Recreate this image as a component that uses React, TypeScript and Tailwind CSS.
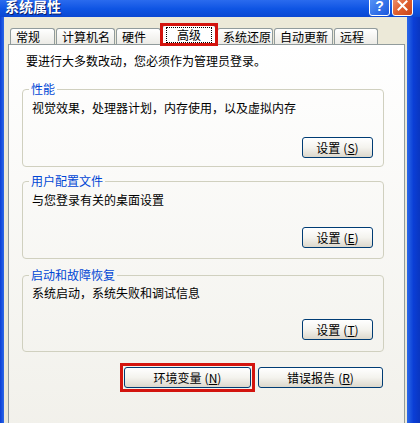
import React from "react";

function Tab({ label, cls }: { label: string; cls: string }) {
  return (
    <div
      className={`${cls} mt-[3px] h-[16px] shrink-0 rounded-t-[3px] border border-b-0 border-[#919B9C] bg-linear-to-b from-white to-[#ECEBE6] pl-[5px] text-[12px] leading-[15px] text-black whitespace-nowrap`}
    >
      {label}
    </div>
  );
}

function XPButton({ label, k, cls }: { label: string; k: string; cls: string }) {
  return (
    <div
      className={`${cls} h-[21px] shrink-0 rounded-[3px] border border-[#003C74] bg-linear-to-b from-white via-[#F4F3EE] to-[#DCD8CC] flex items-center justify-center text-[12px] leading-none text-black whitespace-nowrap`}
    >
      <span>{label}</span>
      <span className="ml-[3px]">
        (<span className="underline">{k}</span>)
      </span>
    </div>
  );
}

export default function App() {
  return (
    <div className="w-[420px] h-[423px] overflow-hidden flex flex-col bg-[#0B3ED6] font-['Noto_Sans_CJK_SC','Noto_Sans',sans-serif]">
      {/* Title bar */}
      <div className="h-[17px] shrink-0 flex items-start bg-linear-to-b from-[#2A6BEE] via-[#0F55E4] to-[#0A47D2]">
        <div className="ml-[5px] -mt-[1px] text-[14px] leading-[14px] font-bold text-white [text-shadow:1px_1px_0_#0A1E6A]">
          系统属性
        </div>
        <div className="ml-auto mr-[7px] -mt-[5px] flex gap-[2px]">
          <div className="w-[21px] h-[21px] rounded-[3px] border border-white bg-linear-to-br from-[#5B98F8] to-[#1A55DC] flex items-center justify-center text-white font-bold text-[14px] leading-none font-['Liberation_Sans',sans-serif]">
            ?
          </div>
          <div className="w-[21px] h-[21px] rounded-[3px] border border-white bg-linear-to-br from-[#EE9A7A] via-[#E0602F] to-[#C8441A] flex items-center justify-center">
            <svg width="11" height="11" viewBox="0 0 11 11">
              <path d="M1.5 1.5 L9.5 9.5 M9.5 1.5 L1.5 9.5" stroke="white" strokeWidth="2" strokeLinecap="square" />
            </svg>
          </div>
        </div>
      </div>

      {/* Window body */}
      <div className="flex flex-1 min-h-0">
        <div className="w-[4px] shrink-0 bg-linear-to-r from-[#0B3ED6] to-[#2C68E8]" />
        <div className="flex-1 bg-[#ECE9D8] pt-[8px] pl-[4px] pr-[2px] flex flex-col min-h-0">
          {/* Tabs */}
          <div className="relative z-10 -mb-[1px] ml-[2px] flex items-start gap-[1px] h-[20px]">
            <Tab label="常规" cls="w-[45px]" />
            <Tab label="计算机名" cls="w-[59px]" />
            <Tab label="硬件" cls="w-[45px]" />
            <div className="relative w-[54px] h-[20px] shrink-0 rounded-t-[3px] border border-b-0 border-[#919B9C] bg-white">
              <div className="mx-auto mt-[1px] w-[46px] h-[16px] border border-dotted border-black flex items-center justify-center text-[12px] leading-none text-black">
                高级
              </div>
              <div className="absolute -left-[3px] -right-[3px] -top-[3px] -bottom-[1px] border-[3px] border-[#D3140E]" />
            </div>
            <Tab label="系统还原" cls="w-[56px]" />
            <Tab label="自动更新" cls="w-[59px]" />
            <Tab label="远程" cls="w-[44px]" />
          </div>

          {/* Panel */}
          <div className="flex-1 min-h-[400px] border border-[#919B9C] bg-linear-to-b from-white to-[#F1F0EA] pt-[9px] pl-[13px] text-[12px] text-black">
            <div className="ml-[4px] leading-[14px]">要进行大多数改动，您必须作为管理员登录。</div>

            {/* 性能 */}
            <fieldset className="mt-[14px] w-[362px] rounded-[4px] border border-[#D0D0BF] pl-[9px] pr-[10px] pb-[8px]">
              <legend className="-ml-[3px] px-[2px] text-[12px] leading-[14px] text-[#0046D5]">性能</legend>
              <div className="mt-[5px] leading-[14px]">视觉效果，处理器计划，内存使用，以及虚拟内存</div>
              <div className="mt-[22px] flex justify-end">
                <XPButton label="设置" k="S" cls="w-[71px]" />
              </div>
            </fieldset>

            {/* 用户配置文件 */}
            <fieldset className="mt-[7px] w-[362px] rounded-[4px] border border-[#D0D0BF] pl-[9px] pr-[10px] pb-[10px]">
              <legend className="-ml-[3px] px-[2px] text-[12px] leading-[14px] text-[#0046D5]">用户配置文件</legend>
              <div className="mt-[5px] leading-[14px]">与您登录有关的桌面设置</div>
              <div className="mt-[20px] flex justify-end">
                <XPButton label="设置" k="E" cls="w-[71px]" />
              </div>
            </fieldset>

            {/* 启动和故障恢复 */}
            <fieldset className="mt-[9px] w-[362px] rounded-[4px] border border-[#D0D0BF] pl-[9px] pr-[10px] pb-[11px]">
              <legend className="-ml-[3px] px-[2px] text-[12px] leading-[14px] text-[#0046D5]">启动和故障恢复</legend>
              <div className="mt-[4px] leading-[14px]">系统启动，系统失败和调试信息</div>
              <div className="mt-[19px] flex justify-end">
                <XPButton label="设置" k="T" cls="w-[71px]" />
              </div>
            </fieldset>

            {/* Bottom buttons */}
            <div className="mt-[11px] w-[362px] pr-[1px] flex items-center justify-end gap-[3px]">
              <div className="border-[3px] border-[#D3140E] p-[1px]">
                <XPButton label="环境变量" k="N" cls="w-[127px]" />
              </div>
              <XPButton label="错误报告" k="R" cls="w-[125px]" />
            </div>
          </div>
        </div>
        <div className="w-[13px] shrink-0 bg-linear-to-r from-[#2C68E8] via-[#0B3ED6] to-[#0A36C0]" />
      </div>
    </div>
  );
}
